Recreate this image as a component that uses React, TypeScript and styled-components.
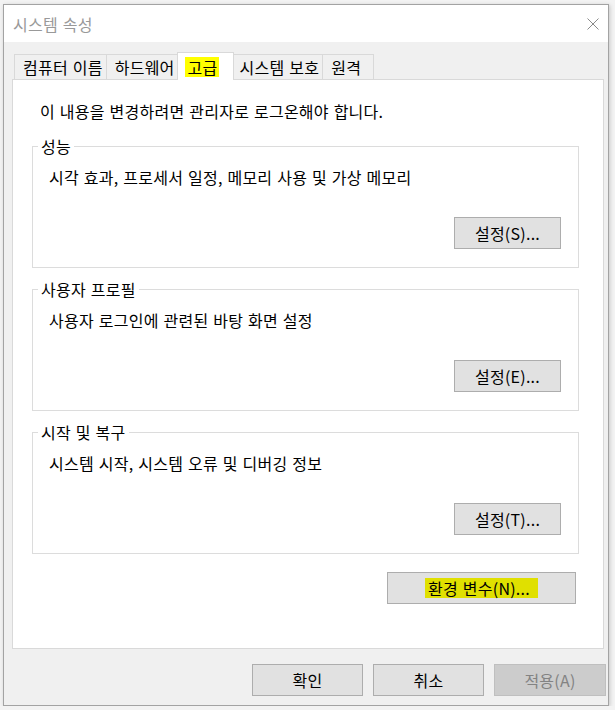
import styled, { createGlobalStyle } from "styled-components"

const GlobalStyle = createGlobalStyle`
    html, body {
        margin: 0;
        padding: 0;
        background: #f3f3f3;
    }
    body {
        font-family: "Noto Sans CJK KR", "Noto Sans", sans-serif;
        font-size: 16px;
        letter-spacing: 0.25px;
        word-spacing: 1px;
        color: #000;
    }
`

const Window = styled.div`
    box-sizing: border-box;
    margin: 4px 0 0 3px;
    width: 606px;
    height: 702px;
    border: 1px solid #a3a3a3;
    background: #f0f0f0;
    display: flex;
    flex-direction: column;
    box-shadow: 1px 1px 4px rgba(0, 0, 0, 0.18);
`

const TitleBar = styled.div`
    height: 37px;
    background: #fff;
    display: flex;
    align-items: center;
    justify-content: space-between;
    padding: 0 9px 0 9px;
`

const TitleText = styled.span`
    color: #999;
    line-height: 20px;
`

const Body = styled.div`
    display: flex;
    flex-direction: column;
    padding: 10px 4px 9px 8px;
`

const TabRow = styled.div`
    display: flex;
    align-items: flex-end;
    height: 27px;
    padding-left: 2px;
`

const Tab = styled.div<{ $active?: boolean }>`
    box-sizing: border-box;
    display: flex;
    align-items: center;
    height: ${p => (p.$active ? "28px" : "25px")};
    min-width: ${p => (p.$active ? "57px" : "52px")};
    padding: ${p => (p.$active ? "0 3px 0 7px" : "0 3px 0 8px")};
    margin: ${p => (p.$active ? "0 -2px -1px -2px" : "0 0 0 -1px")};
    border: 1px solid #d9d9d9;
    border-bottom: none;
    background: ${p => (p.$active ? "#fff" : "#f0f0f0")};
    position: relative;
    z-index: ${p => (p.$active ? 1 : 0)};
    line-height: 20px;
    white-space: nowrap;

    &:first-child {
        margin-left: 0;
    }
`

const Highlight = styled.span<{ $tone?: string; $tail?: number }>`
    display: inline-block;
    background: ${p => p.$tone || "#ffff00"};
    padding: 0 ${p => p.$tail || 1}px 0 3px;
    line-height: 20px;
`

const Panel = styled.div`
    box-sizing: border-box;
    height: 570px;
    background: #fff;
    border: 1px solid #d9d9d9;
    padding: 21px 24px 0 19px;
    display: flex;
    flex-direction: column;
`

const Intro = styled.p`
    margin: 0 0 25px 0;
    padding-left: 8px;
    line-height: 20px;
`

const Groups = styled.div`
    display: flex;
    flex-direction: column;
    gap: 21px;
`

const GroupBox = styled.div`
    border: 1px solid #dcdcdc;
    padding: 0 17px 18px 0;
    display: flex;
    flex-direction: column;
`

const Legend = styled.span`
    align-self: flex-start;
    margin: -11px 0 0 5px;
    padding: 0 3px;
    background: #fff;
    line-height: 20px;
`

const Desc = styled.p`
    margin: 11px 0 0 0;
    padding-left: 16px;
    line-height: 20px;
`

const ButtonRow = styled.div<{ $top: number; $right?: number }>`
    display: flex;
    justify-content: flex-end;
    margin-top: ${p => p.$top}px;
    padding-right: ${p => p.$right || 0}px;
`

const Button = styled.button<{ $width: number; $disabled?: boolean }>`
    box-sizing: border-box;
    width: ${p => p.$width}px;
    height: 32px;
    display: flex;
    align-items: center;
    justify-content: center;
    background: ${p => (p.$disabled ? "#cccccc" : "#e1e1e1")};
    border: 1px solid ${p => (p.$disabled ? "#bfbfbf" : "#adadad")};
    color: ${p => (p.$disabled ? "#838383" : "#000")};
    font-family: inherit;
    font-size: 16px;
    letter-spacing: inherit;
    word-spacing: inherit;
    line-height: 20px;
    padding: 0;
    border-radius: 0;
`

const Footer = styled.div`
    display: flex;
    justify-content: flex-end;
    gap: 10px;
    margin: 15px -2px 0 0;
`

function CloseIcon() {
    return (
        <svg width="12" height="12" viewBox="0 0 12 12">
            <path d="M0.5 0.5 L11.5 11.5 M11.5 0.5 L0.5 11.5" stroke="#8a8a8a" strokeWidth="1" fill="none" />
        </svg>
    )
}

const groups = [
    { title: "성능", desc: "시각 효과, 프로세서 일정, 메모리 사용 및 가상 메모리", button: "설정(S)..." },
    { title: "사용자 프로필", desc: "사용자 로그인에 관련된 바탕 화면 설정", button: "설정(E)..." },
    { title: "시작 및 복구", desc: "시스템 시작, 시스템 오류 및 디버깅 정보", button: "설정(T)..." },
]

export default function App() {
    return (
        <>
            <GlobalStyle />
            <Window>
                <TitleBar>
                    <TitleText>시스템 속성</TitleText>
                    <CloseIcon />
                </TitleBar>
                <Body>
                    <TabRow>
                        <Tab>컴퓨터 이름</Tab>
                        <Tab>하드웨어</Tab>
                        <Tab $active>
                            <Highlight>고급</Highlight>
                        </Tab>
                        <Tab>시스템 보호</Tab>
                        <Tab>원격</Tab>
                    </TabRow>
                    <Panel>
                        <Intro>이 내용을 변경하려면 관리자로 로그온해야 합니다.</Intro>
                        <Groups>
                            {groups.map(g => (
                                <GroupBox key={g.title}>
                                    <Legend>{g.title}</Legend>
                                    <Desc>{g.desc}</Desc>
                                    <ButtonRow $top={30}>
                                        <Button $width={107}>{g.button}</Button>
                                    </ButtonRow>
                                </GroupBox>
                            ))}
                        </Groups>
                        <ButtonRow $top={18} $right={3}>
                            <Button $width={189}>
                                <Highlight $tone="#e0e000" $tail={8}>환경 변수(N)...</Highlight>
                            </Button>
                        </ButtonRow>
                    </Panel>
                    <Footer>
                        <Button $width={111}>확인</Button>
                        <Button $width={111}>취소</Button>
                        <Button $width={112} $disabled>적용(A)</Button>
                    </Footer>
                </Body>
            </Window>
        </>
    )
}
